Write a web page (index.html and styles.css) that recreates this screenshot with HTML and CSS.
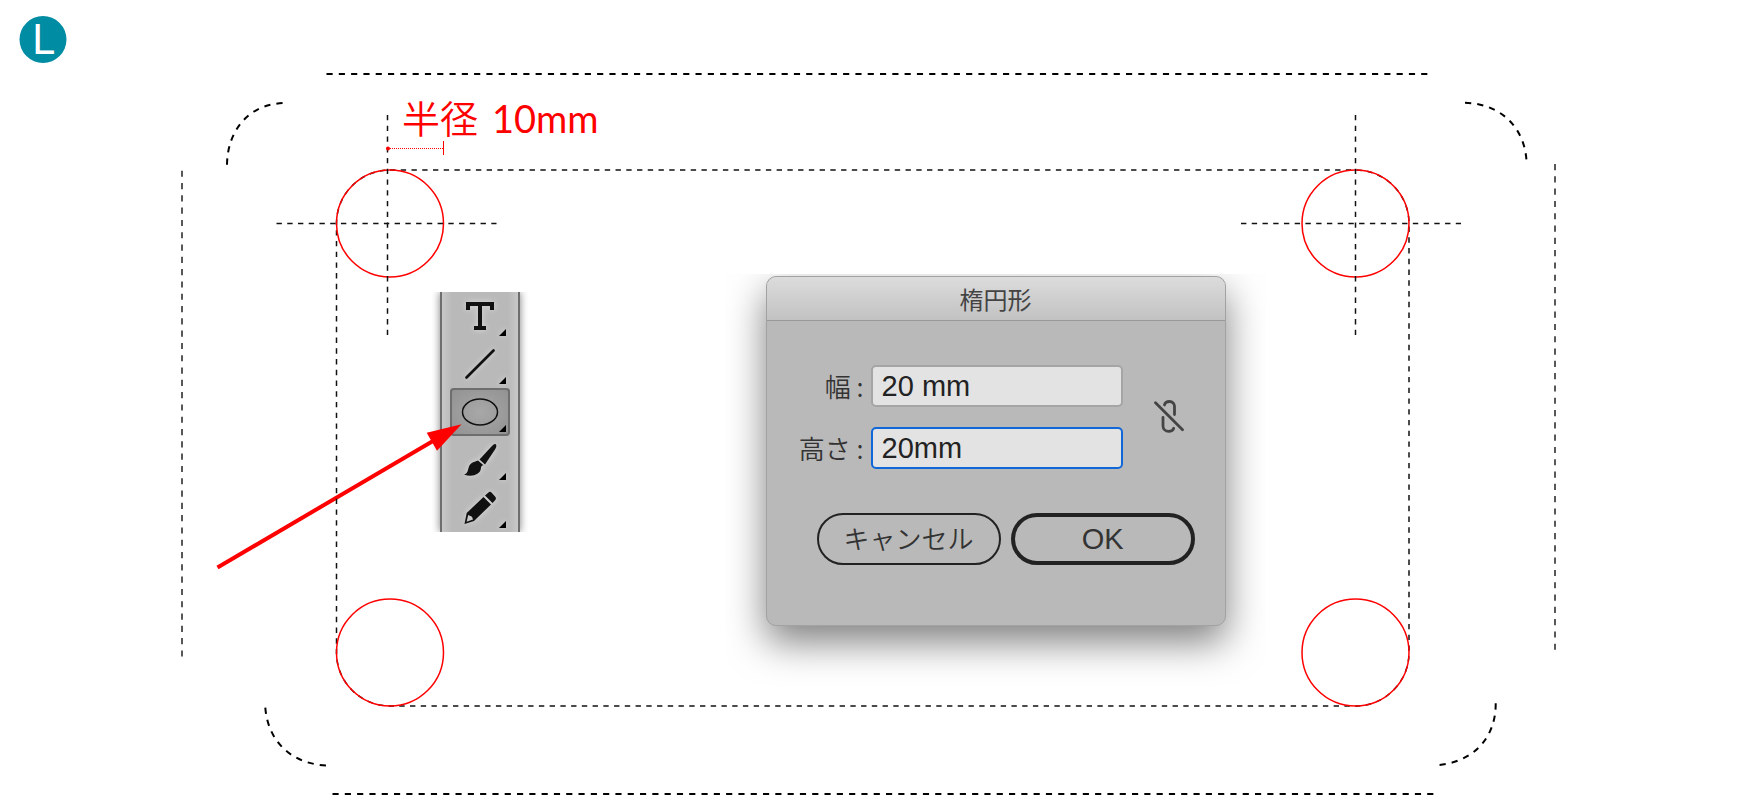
FILE: index.html
```
<!DOCTYPE html>
<html lang="ja">
<head>
<meta charset="utf-8">
<title>角丸ガイドの作り方</title>
<meta name="viewport" content="width=device-width,initial-scale=1">
<link rel="stylesheet" href="styles.css">
</head>
<body>

<main class="stage">

  <!-- Tool palette -->
  <div class="toolbar" role="toolbar" aria-label="ツール">
    <button class="tool" type="button" aria-label="文字">
      <svg viewBox="0 0 60 48">
        <path d="M16 10h28v8h-4v-4h-8v20h4v4H24v-4h4V14h-8v4h-4z"/>
        <path class="corner" d="M56 37v7h-7z"/>
      </svg>
    </button>
    <button class="tool" type="button" aria-label="直線">
      <svg viewBox="0 0 60 48">
        <path d="M16.500 37.500L43.500 10.500" fill="none" stroke="#111" stroke-width="2.600" stroke-linecap="round"/>
        <path class="corner" d="M56 37v7h-7z"/>
      </svg>
    </button>
    <button class="tool selected" type="button" aria-label="楕円形" aria-pressed="true">
      <svg viewBox="0 0 60 48">
        <ellipse cx="30" cy="24" rx="17.500" ry="13" fill="none" stroke="#111" stroke-width="1.500"/>
        <path class="corner" d="M56 37v7h-7z"/>
      </svg>
    </button>
    <button class="tool" type="button" aria-label="ブラシ">
      <svg viewBox="0 0 60 48">
        <path d="M45.500 8c1.500 1 .8 3.500-.5 5.500L35 28.500l-5.500-5L41 11c1.500-1.600 3.300-3.500 4.500-3z"/>
        <path d="M28 24.500l5.500 4.800c-2 0-2.500 1.700-2.700 3.700C30 38.500 22 41.500 14 38.500c4-1 3.500-4 5-8 1.300-3.600 5.500-4.800 9-6z"/>
        <path class="corner" d="M56 37v7h-7z"/>
      </svg>
    </button>
    <button class="tool" type="button" aria-label="鉛筆">
      <svg viewBox="0 0 60 48">
        <path d="M38.500 8.500q1.500-1.500 3 0l4 4.500q1 1.500 0 2.800L42.500 19 35 11.500z"/>
        <path fill-rule="evenodd" d="M33.500 13l7.500 7.500L24 37 14.500 40l2.200-11zM18.200 31l-1.600 6.700 6.400-2.200-1-2.800z"/>
        <path class="corner" d="M56 37v7h-7z"/>
      </svg>
    </button>
  </div>

  <!-- Guides, circles and callouts -->
  <svg class="diagram" viewBox="0 0 1740 800">
    <circle class="badge" cx="43" cy="39.500" r="23.500"/>
    <text class="badge-text" x="43" y="54" text-anchor="middle">L</text>

    <!-- arrow to the ellipse tool -->
    <path class="arrow" d="M217.500 567.500L433 441"/>
    <path class="arrow-head" d="M461.500 424.300L426.700 432.700 437 450.700z"/>

    <!-- trim edges -->
    <g class="trim">
      <path d="M326.500 74H1428.500"/>
      <path d="M332.500 794H1434.500"/>
      <path class="thin" d="M182 170.700V657.500"/>
      <path class="thin" d="M1555 164V651"/>
      <path d="M227 164.700C227.500 130 249 104 284 103"/>
      <path d="M1465 102.700C1500 104 1524 126 1526.500 160.500"/>
      <path d="M265.300 707.700C268 742 292 764 326.700 765.500"/>
      <path d="M1495.700 703.300C1496 738 1473 762 1438.300 765"/>
    </g>

    <!-- card outline -->
    <rect class="guide" x="336.500" y="170" width="1072.500" height="536" rx="53.500"/>

    <g class="round">
      <circle cx="390" cy="223.500" r="53.500"/>
      <circle cx="1355.500" cy="223.500" r="53.500"/>
      <circle cx="390" cy="652.500" r="53.500"/>
      <circle cx="1355.500" cy="652.500" r="53.500"/>
    </g>

    <g class="guide">
      <path d="M387.500 115V335"/>
      <path d="M276.500 223.500H496.500"/>
      <path d="M1355.500 115V335"/>
      <path d="M1241 223.500H1461"/>
    </g>

    <!-- radius dimension -->
    <path class="measure-line" d="M388 148.500H443.500"/>
    <path class="measure-end" d="M443.500 141V155"/>
    <circle class="measure-dot" cx="388" cy="148.500" r="2"/>
    <text class="measure-text" x="402" y="133">半径 <tspan class="measure-value" x="492">10mm</tspan></text>
  </svg>

  <!-- Ellipse dialog -->
  <form class="dialog" aria-labelledby="dialog-title">
    <h1 class="dialog-title" id="dialog-title">楕円形</h1>
    <div class="dialog-body">
      <div class="size">
        <div class="fields">
          <label for="width">幅 :</label>
          <input id="width" type="text" value="20 mm">
          <label for="height">高さ :</label>
          <input class="active" id="height" type="text" value="20mm">
        </div>
        <button class="link" type="button" aria-label="縦横比を固定">
          <svg width="30" height="34" viewBox="0 0 30 34">
            <path d="M10.500 5C11 2.500 13 1.500 15.500 1.500 18.500 1.500 20.500 3.500 20.500 6.500V14.500"/>
            <path d="M9 17.500V26C9 29 11.500 31.300 14.700 31.300 17 31.300 19 30.500 19.700 28.300"/>
            <path d="M1.500 2.800L28.500 29.800"/>
          </svg>
        </button>
      </div>
      <div class="actions">
        <button class="btn" type="button">キャンセル</button>
        <button class="btn primary" type="submit">OK</button>
      </div>
    </div>
  </form>

</main>

</body>
</html>
```
FILE: styles.css
```
/* Reset & Base */
*,*::before,*::after{box-sizing:border-box;margin:0;padding:0}
body{
  font-family:"Noto Sans CJK JP","Noto Sans",sans-serif;
  background:#fff;
  color:#333;
}
button,input{font:inherit;color:inherit}
button{background:none;border:0;cursor:pointer}

/* Canvas */
.stage{position:relative;overflow:hidden}
.diagram{
  position:relative;
  display:block;
  width:100%;height:auto;
  pointer-events:none;
}
.badge{fill:#008ca3}
.badge-text{font:40px "DejaVu Sans",sans-serif;fill:#fff}

/* Dashed guides */
.trim{fill:none;stroke:#000;stroke-width:2;stroke-dasharray:6.15}
.trim .thin{stroke:#222;stroke-width:1.5}
.guide{fill:none;stroke:#111;stroke-width:1.5;stroke-dasharray:5.37}

/* Red marks */
.round{fill:none;stroke:#f00;stroke-width:1.5}
.arrow{stroke:#f00;stroke-width:4}
.arrow-head{fill:#f00}
.measure-line{stroke:#f00;stroke-width:1;stroke-dasharray:1}
.measure-end{stroke:#f00;stroke-width:1}
.measure-dot{fill:#f00}
.measure-text{font-size:38px;font-weight:350;fill:#f00}
.measure-value{font-family:Lato,sans-serif;font-weight:400}

/* Tool palette */
.toolbar{
  position:absolute;left:25.3%;top:36.5%;
  display:flex;flex-direction:column;
  padding:0 8px;
  background:linear-gradient(90deg,#c8c8c8,#b9b9b9 10px,#b9b9b9 calc(100% - 10px),#c8c8c8);
  border:solid #6e6e6e;border-width:0 2px;
  box-shadow:0 0 8px rgba(0,0,0,.5);
  clip-path:inset(0 -8px);
}
.tool{width:60px;height:48px;border-radius:4px}
.tool svg{display:block;width:60px;height:48px;fill:#111;filter:drop-shadow(0 0 3px #ddd)}
.tool.selected{
  background:radial-gradient(#a8a8a8,#909090);
  box-shadow:inset 0 0 0 2px #6e6e6e;
}
.tool.selected svg{filter:none}
.corner{fill:#000}

/* Dialog */
.dialog{
  position:absolute;left:44%;top:34.5%;
  width:460px;
  background:#b9b9b9;
  border:1px solid #a2a2a2;
  border-radius:10px;
  box-shadow:0 16px 38px rgba(0,0,0,.5);
  clip-path:inset(-2px -40px -60px);
}
.dialog-title{
  font-size:24px;font-weight:400;line-height:43px;
  text-align:center;color:#444;
  background:linear-gradient(#dcdcdc,#c2c2c2);
  border-bottom:1px solid #999;
  border-radius:9px 9px 0 0;
}
.dialog-body{padding:44px 30px 60px}
.size{display:flex;align-items:center;justify-content:flex-end;gap:31px;padding-right:11px}
.fields{display:grid;grid-template-columns:auto 252px;gap:20px 7px;align-items:center}
.fields label{font-size:26px;font-weight:350;line-height:40px;text-align:right}
.fields input{
  width:100%;height:42px;
  padding:0 9px;
  font-family:"Liberation Sans",Arial,sans-serif;font-size:29px;
  color:#222;
  background:#e3e3e3;
  border:2px solid #a5a5a5;
  border-radius:5px;
  outline:0;
}
.fields input.active,.fields input:focus{border-color:#1068d8}
.link svg{display:block;fill:none;stroke:#444;stroke-width:2.8;stroke-linecap:round}

/* Buttons */
.actions{display:flex;justify-content:flex-end;gap:10px;margin-top:44px}
.btn{
  width:184px;height:52px;
  padding-bottom:2px;
  font-size:26px;font-weight:350;line-height:26px;
  border:2px solid #222;
  border-radius:26px;
}
.btn.primary{
  padding-bottom:0;
  font-family:"Liberation Sans",Arial,sans-serif;font-size:29px;
  border-width:4px;
}
```
